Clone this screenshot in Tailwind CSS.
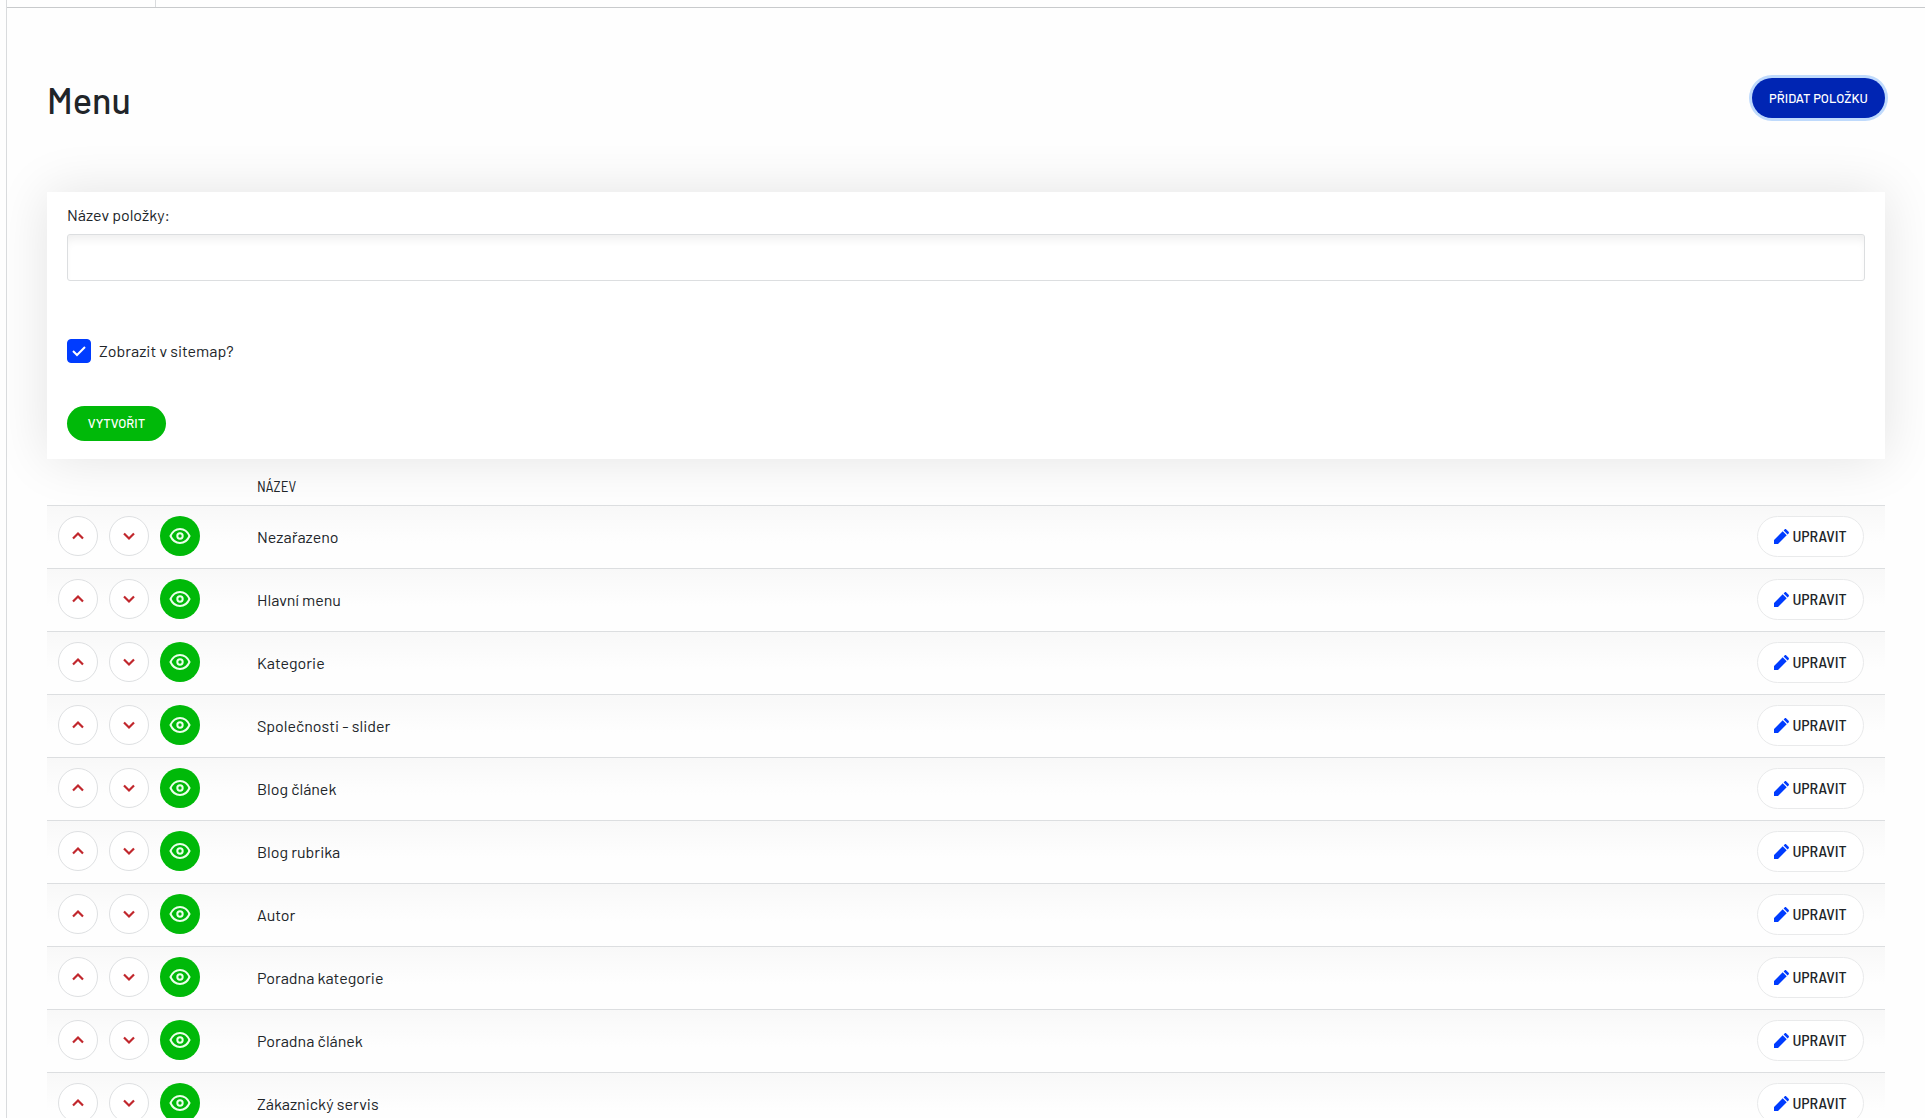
<!DOCTYPE html>
<html lang="cs">
<head>
  <meta charset="UTF-8" />
  <meta name="viewport" content="width=device-width, initial-scale=1.0"/>
  <title>Menu</title>
  <script src="https://cdn.jsdelivr.net/npm/@tailwindcss/browser@4"></script>
  <style>
    body {
      font-family: Barlow, Roboto, sans-serif;
    }
    .condensed {
      font-family: 'Barlow Semi Condensed', Barlow, Roboto, sans-serif;
    }
  </style>
</head>
<body class="bg-[#fefefe] text-[#212529] text-[16px]">
  <div class="h-screen overflow-hidden ml-[6px] border-l border-[#d9dbdd]">

    <!-- top bar -->
    <header class="h-2 border-b border-[#c8cacc] flex">
      <div class="w-[149px] border-r border-[#d9dbdd]"></div>
    </header>

    <main class="px-10 pt-[70px]">
      <div class="flex items-start justify-between h-[114px]">
        <h1 class="text-[36px] leading-[44px] font-medium">Menu</h1>
        <button type="button" class="w-[133px] h-10 pt-px rounded-full bg-[#0025b3] ring-3 ring-[#bfdafc] text-white text-[13px] font-medium">PŘIDAT POLOŽKU</button>
      </div>

      <!-- new item form -->
      <form class="bg-white px-5 pt-3 pb-[18px] shadow-[0_0_50px_rgba(0,0,0,0.11)]">
        <label for="name" class="block leading-[21px] mb-[9px]">Název položky:</label>
        <input id="name" type="text" class="block w-full h-[47px] px-3 border border-[#dcdee0] rounded-[3px] bg-white shadow-[inset_0_8px_10px_-4px_rgba(0,0,0,0.07)]" />
        <div class="flex items-center gap-2 mt-[58px] h-6">
          <span class="grid">
            <input id="sitemap" type="checkbox" checked class="peer appearance-none col-start-1 row-start-1 size-6 rounded-[4px] border border-[#003cff] bg-white checked:bg-[#003cff]" />
            <svg class="col-start-1 row-start-1 size-6 pointer-events-none invisible peer-checked:visible" viewBox="0 0 24 24" fill="none" stroke="#fff" stroke-width="2"><path d="M6 12l4 4 8-8"/></svg>
          </span>
          <label for="sitemap">Zobrazit v sitemap?</label>
        </div>
        <button type="submit" class="block mt-[43px] w-[99px] h-[35px] pt-px rounded-full bg-[#00b909] text-white text-[13px] font-medium">VYTVOŘIT</button>
      </form>

      <table class="w-full">
        <thead>
          <tr class="h-[46px]">
            <th class="w-[199px]"></th>
            <th class="condensed text-left font-normal text-[15px] pl-[11px] pt-2">NÁZEV</th>
            <th></th>
          </tr>
        </thead>
        <tbody id="menuRows"></tbody>
      </table>
    </main>
  </div>

  <script>
    const items = [
      "Nezařazeno",
      "Hlavní menu",
      "Kategorie",
      "Společnosti - slider",
      "Blog článek",
      "Blog rubrika",
      "Autor",
      "Poradna kategorie",
      "Poradna článek",
      "Zákaznický servis",
    ];

    document.getElementById("menuRows").innerHTML = items
      .map(name => `
        <tr class="h-[63px] border-t border-[#dcdee0] bg-linear-to-b from-[#f8f8f8] to-[#fefefe] to-60%">
          <td class="pl-[11px] pb-px">
            <div class="flex gap-[11px]">
              <button type="button" aria-label="Nahoru" class="size-10 rounded-full border border-[#dee0e2] bg-white flex items-center justify-center">
                <svg class="size-3" viewBox="0 0 12 12" fill="none" stroke="#c1272d" stroke-width="2.200"><path d="M1 8.500l5-5 5 5"/></svg>
              </button>
              <button type="button" aria-label="Dolů" class="size-10 rounded-full border border-[#dee0e2] bg-white flex items-center justify-center">
                <svg class="size-3" viewBox="0 0 12 12" fill="none" stroke="#c1272d" stroke-width="2.200"><path d="M1 3.500l5 5 5-5"/></svg>
              </button>
              <button type="button" aria-label="Zobrazit" class="size-10 rounded-full bg-[#00b909] flex items-center justify-center">
                <svg class="w-[22px] h-[18px]" viewBox="0 0 22 18" fill="none" stroke="#eaffea" stroke-width="2"><path d="M1.500 9C3.500 4.500 6.800 2 11 2s7.500 2.500 9.500 7c-2 4.500-5.300 7-9.500 7s-7.500-2.500-9.500-7z"/><circle cx="11" cy="9" r="2.700"/></svg>
              </button>
            </div>
          </td>
          <td class="pl-[11px] pt-px">${name}</td>
          <td class="pr-[21px] pb-px">
            <button type="button" class="condensed ml-auto w-[107px] h-[41px] rounded-full border border-[#e9eaeb] bg-white flex items-center justify-center gap-[3px] text-[16px] font-medium">
              <svg class="size-[15px]" viewBox="0 0 15 15" fill="#003cff"><path d="M0 15v-4L8.700 2.300l4 4L4 15zM9.600 1.400l1-1c.5-.5 1.200-.5 1.700 0l2.300 2.300c.5.5.5 1.200 0 1.700l-1 1z"/></svg>
              UPRAVIT
            </button>
          </td>
        </tr>
      `).join("");
  </script>
</body>
</html>
